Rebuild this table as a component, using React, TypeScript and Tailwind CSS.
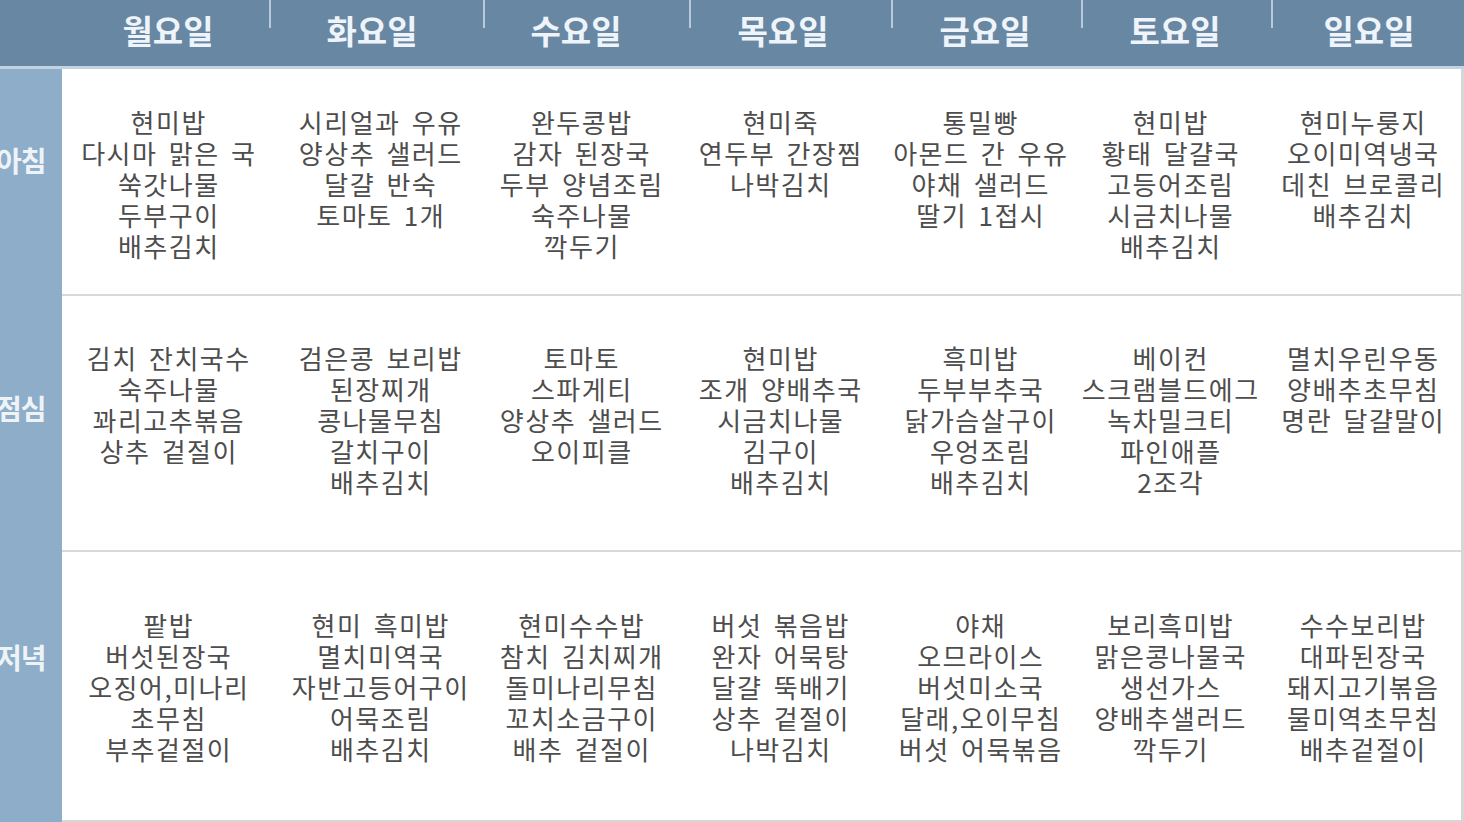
import React from "react";

const days = ["월요일", "화요일", "수요일", "목요일", "금요일", "토요일", "일요일"];
const headWidths = ["w-[208px]", "w-[214px]", "w-[206px]", "w-[202px]", "w-[190px]", "w-[190px]", "flex-1"];
const headPad = ["pl-[4px]", "pr-[10px]", "pr-[22px]", "pr-[16px]", "pr-[4px]", "pr-[4px]", "pl-[2px]"];
const bodyWidths = ["w-[212px]", "w-[212px]", "w-[190px]", "w-[208px]", "w-[192px]", "w-[188px]", "flex-1"];

const meals: { label: string; h: string; pt: string; lt: string; items: string[][] }[] = [
  {
    label: "아침",
    h: "h-[227px]",
    pt: "pt-[37px]",
    lt: "pt-[77px]",
    items: [
      ["현미밥", "다시마 맑은 국", "쑥갓나물", "두부구이", "배추김치"],
      ["시리얼과 우유", "양상추 샐러드", "달걀 반숙", "토마토 1개"],
      ["완두콩밥", "감자 된장국", "두부 양념조림", "숙주나물", "깍두기"],
      ["현미죽", "연두부 간장찜", "나박김치"],
      ["통밀빵", "아몬드 간 우유", "야채 샐러드", "딸기 1접시"],
      ["현미밥", "황태 달걀국", "고등어조림", "시금치나물", "배추김치"],
      ["현미누룽지", "오이미역냉국", "데친 브로콜리", "배추김치"],
    ],
  },
  {
    label: "점심",
    h: "h-[256px]",
    pt: "pt-[46px]",
    lt: "pt-[98px]",
    items: [
      ["김치 잔치국수", "숙주나물", "꽈리고추볶음", "상추 겉절이"],
      ["검은콩 보리밥", "된장찌개", "콩나물무침", "갈치구이", "배추김치"],
      ["토마토", "스파게티", "양상추 샐러드", "오이피클"],
      ["현미밥", "조개 양배추국", "시금치나물", "김구이", "배추김치"],
      ["흑미밥", "두부부추국", "닭가슴살구이", "우엉조림", "배추김치"],
      ["베이컨", "스크램블드에그", "녹차밀크티", "파인애플", "2조각"],
      ["멸치우린우동", "양배추초무침", "명란 달걀말이"],
    ],
  },
  {
    label: "저녁",
    h: "flex-1",
    pt: "pt-[57px]",
    lt: "pt-[91px]",
    items: [
      ["팥밥", "버섯된장국", "오징어,미나리", "초무침", "부추겉절이"],
      ["현미 흑미밥", "멸치미역국", "자반고등어구이", "어묵조림", "배추김치"],
      ["현미수수밥", "참치 김치찌개", "돌미나리무침", "꼬치소금구이", "배추 겉절이"],
      ["버섯 볶음밥", "완자 어묵탕", "달걀 뚝배기", "상추 겉절이", "나박김치"],
      ["야채", "오므라이스", "버섯미소국", "달래,오이무침", "버섯 어묵볶음"],
      ["보리흑미밥", "맑은콩나물국", "생선가스", "양배추샐러드", "깍두기"],
      ["수수보리밥", "대파된장국", "돼지고기볶음", "물미역초무침", "배추겉절이"],
    ],
  },
];

export default function App() {
  return (
    <div
      className="w-[1464px] h-[822px] flex flex-col bg-white overflow-hidden"
      style={{ fontFamily: '"Noto Sans CJK KR", "Noto Sans", sans-serif' }}
    >
      {/* Header */}
      <div className="h-[66px] flex bg-[#6787a3] shrink-0">
        <div className="w-[62px]" />
        {days.map((d, i) => (
          <div key={d} className={`${headWidths[i]} ${headPad[i]} relative flex items-center justify-center`}>
            {i > 0 && <div className="absolute left-[-1px] top-0 h-[28px] w-[2px] bg-[#b7c9da]" />}
            <span className="text-[33px] font-bold text-[#eef4fa] leading-none pb-[6px] tracking-[0px]">{d}</span>
          </div>
        ))}
      </div>
      <div className="h-[3px] bg-[#c3d3e2] shrink-0" />
      {/* Body */}
      <div className="flex-1 flex">
        <div className="w-[62px] bg-[#8dadc9] flex flex-col shrink-0 overflow-hidden">
          {meals.map((m) => (
            <div key={m.label} className={`${m.h} ${m.lt} shrink-0`}>
              <span className="block -ml-[4px] text-[28px] font-bold text-[#eef3f8] leading-none tracking-[-1px] whitespace-nowrap">
                {m.label}
              </span>
            </div>
          ))}
        </div>
        <div className="flex-1 flex flex-col border-r-[3px] border-b-[2px] border-[#d6d6d6]">
          {meals.map((m, r) => (
            <div
              key={m.label}
              className={`${m.h} flex ${r < 2 ? "border-b-[2px] border-[#d9d9d9]" : ""} shrink-0`}
            >
              {m.items.map((lines, i) => (
                <div
                  key={i}
                  className={`${bodyWidths[i]} ${m.pt} flex flex-col items-center text-[26px] leading-[31px] text-[#4d4d4d] whitespace-nowrap tracking-[1.5px] [word-spacing:4px]`}
                >
                  {lines.map((l, k) => (
                    <span key={k} className="-mr-[1.5px]">{l}</span>
                  ))}
                </div>
              ))}
            </div>
          ))}
        </div>
      </div>
    </div>
  );
}
